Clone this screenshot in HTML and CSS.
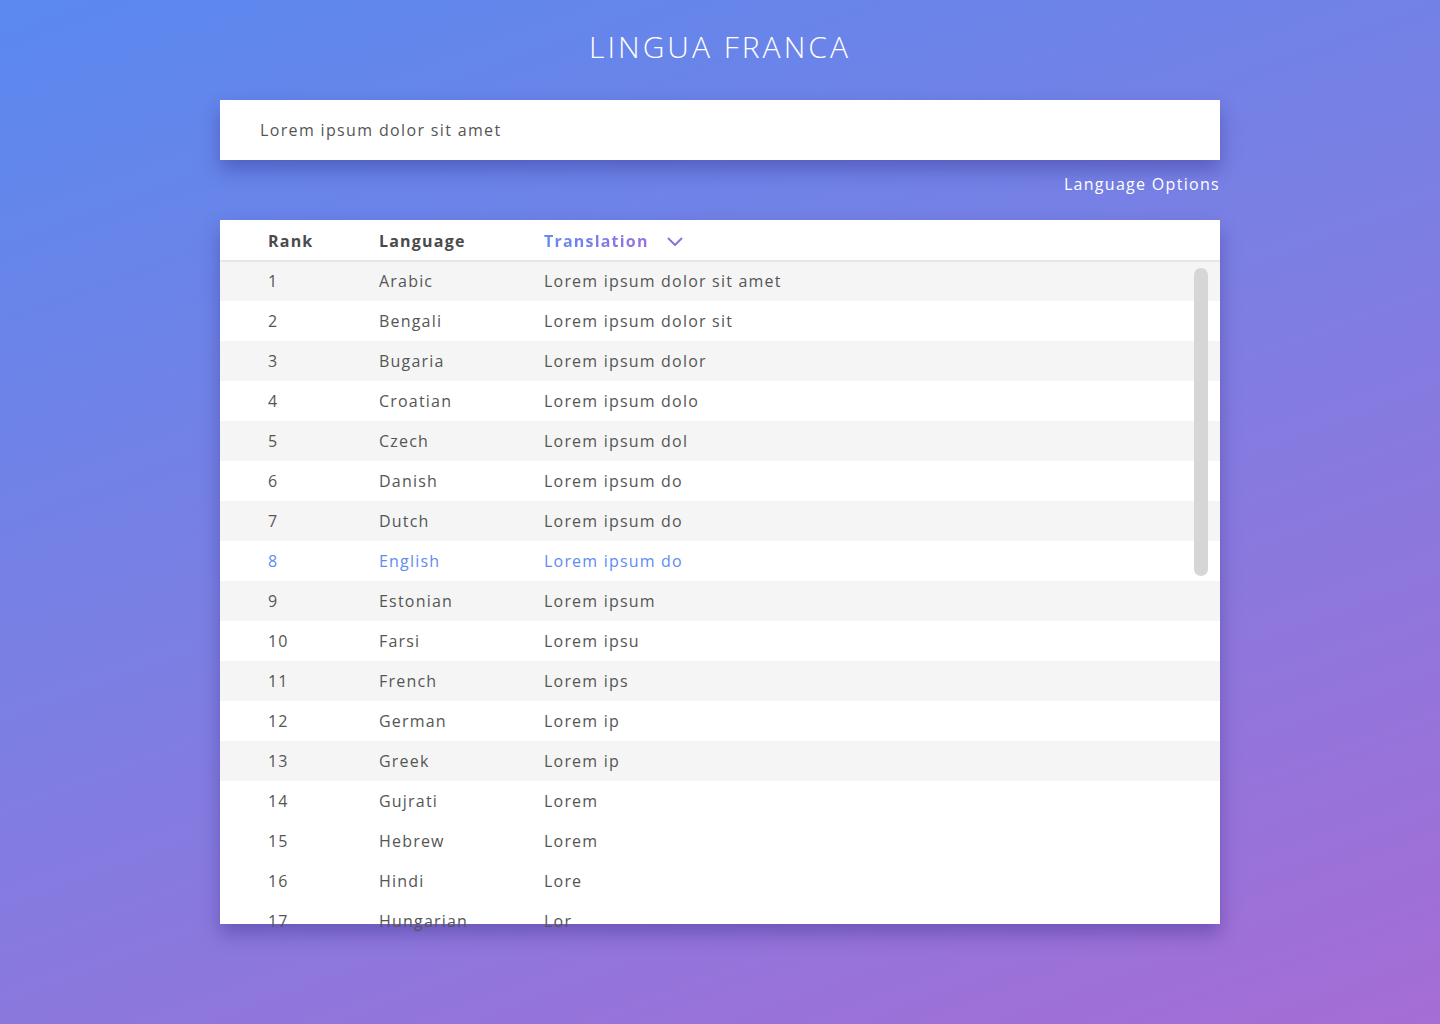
FILE: index.html
```html
<!DOCTYPE html>
<html lang="en">
<head>
<meta charset="utf-8">
<title>Lingua Franca</title>
<link rel="stylesheet" href="styles.css">
</head>
<body>
<main class="page">
  <h1 class="title">LINGUA FRANCA</h1>
  <div class="search">Lorem ipsum dolor sit amet</div>
  <div class="options-row"><span class="options">Language Options</span></div>
  <section class="card">
    <div class="thead">
      <div class="th">Rank</div>
      <div class="th">Language</div>
      <div class="th th-active"><span class="grad">Translation</span>
        <svg class="chev" width="16" height="10" viewBox="0 0 16 10"><path d="M1.5 1.5 L8 8 L14.5 1.5" fill="none" stroke="#8874e2" stroke-width="2" stroke-linecap="round" stroke-linejoin="round"/></svg>
      </div>
    </div>
    <div class="tbody">
      <div class="row stripe"><span>1</span><span>Arabic</span><span>Lorem ipsum dolor sit amet</span></div>
      <div class="row"><span>2</span><span>Bengali</span><span>Lorem ipsum dolor sit</span></div>
      <div class="row stripe"><span>3</span><span>Bugaria</span><span>Lorem ipsum dolor</span></div>
      <div class="row"><span>4</span><span>Croatian</span><span>Lorem ipsum dolo</span></div>
      <div class="row stripe"><span>5</span><span>Czech</span><span>Lorem ipsum dol</span></div>
      <div class="row"><span>6</span><span>Danish</span><span>Lorem ipsum do</span></div>
      <div class="row stripe"><span>7</span><span>Dutch</span><span>Lorem ipsum do</span></div>
      <div class="row active"><span>8</span><span>English</span><span>Lorem ipsum do</span></div>
      <div class="row stripe"><span>9</span><span>Estonian</span><span>Lorem ipsum</span></div>
      <div class="row"><span>10</span><span>Farsi</span><span>Lorem ipsu</span></div>
      <div class="row stripe"><span>11</span><span>French</span><span>Lorem ips</span></div>
      <div class="row"><span>12</span><span>German</span><span>Lorem ip</span></div>
      <div class="row stripe"><span>13</span><span>Greek</span><span>Lorem ip</span></div>
      <div class="row"><span>14</span><span>Gujrati</span><span>Lorem</span></div>
      <div class="row"><span>15</span><span>Hebrew</span><span>Lorem</span></div>
      <div class="row"><span>16</span><span>Hindi</span><span>Lore</span></div>
      <div class="row"><span>17</span><span>Hungarian</span><span>Lor</span></div>
    </div>
    <div class="scrollbar"></div>
  </section>
</main>
</body>
</html>
```

FILE: styles.css
```css
html, body {
  margin: 0;
  padding: 0;
}
body {
  width: 1440px;
  height: 1024px;
  overflow: hidden;
  font-family: "Open Sans", "Noto Sans", sans-serif;
  background: linear-gradient(160deg, #5a89ef 0%, #7b7fe3 45%, #a56dd5 100%);
}
.page {
  width: 1000px;
  margin: 0 auto;
  display: flex;
  flex-direction: column;
}
.title {
  margin: 28px 0 0;
  height: 38px;
  line-height: 38px;
  text-align: center;
  color: #fff;
  font-weight: 300;
  font-size: 30px;
  letter-spacing: 3px;
}
.search {
  margin-top: 34px;
  height: 60px;
  line-height: 60px;
  background: #fff;
  padding-left: 40px;
  color: #555;
  font-size: 16px;
  letter-spacing: 1.35px;
  box-shadow: 0 10px 18px rgba(40, 30, 120, 0.35);
}
.options-row {
  display: flex;
  justify-content: flex-end;
  height: 60px;
  align-items: flex-start;
}
.options {
  margin-top: 13px;
  color: #fff;
  font-size: 16px;
  line-height: 22px;
  letter-spacing: 1.3px;
}
.card {
  position: relative;
  background: #fff;
  height: 704px;
  box-shadow: 0 10px 18px rgba(40, 30, 120, 0.35);
}
.thead {
  position: relative;
  z-index: 1;
  box-sizing: border-box;
  display: grid;
  grid-template-columns: 111px 165px 1fr;
  padding: 2px 0 0 48px;
  height: 42px;
  align-items: center;
  border-bottom: 2px solid #e6e6e6;
}
.th {
  font-size: 16px;
  font-weight: 700;
  color: #4a4a4a;
  letter-spacing: 1.2px;
  display: flex;
  align-items: center;
}
.grad {
  background: linear-gradient(90deg, #5f8cf0, #9a70dc);
  -webkit-background-clip: text;
  background-clip: text;
  color: transparent;
}
.chev {
  margin-left: 18px;
  margin-top: 1px;
}
.tbody {
  margin-top: -1px;
  height: 663px;
}
.row {
  display: grid;
  grid-template-columns: 111px 165px 1fr;
  padding-left: 48px;
  height: 40px;
  align-items: center;
  font-size: 16px;
  color: #555;
  letter-spacing: 1.2px;
}
.row.stripe {
  background: #f5f5f5;
}
.row.active {
  color: #5e8cf0;
}
.scrollbar {
  position: absolute;
  z-index: 2;
  left: 974px;
  top: 48px;
  width: 14px;
  height: 308px;
  border-radius: 7px;
  background: #d6d6d6;
}
```
